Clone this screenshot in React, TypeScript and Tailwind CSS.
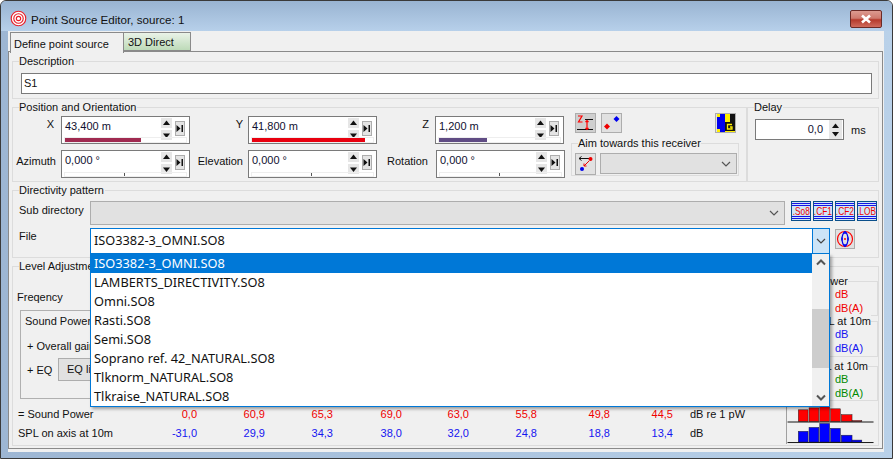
import React from "react";

function Title({ children, className = "" }: { children: React.ReactNode; className?: string }) {
  return <span className={`absolute -top-[8px] left-[6px] bg-[#f0f0f0] pr-[1px] leading-[15px] whitespace-nowrap ${className}`}>{children}</span>;
}

function Tri({ up }: { up?: boolean }) {
  return (
    <svg width="11" height="10" viewBox="0 0 11 10" className="bg-[#e6e6e6] block">
      <path d={up ? "M5.5 2.5L9 7H2Z" : "M5.5 8L2 3.5H9Z"} fill="#111" />
    </svg>
  );
}

function Spin() {
  return (
    <div className="flex flex-col gap-[2px]">
      <Tri up />
      <Tri />
    </div>
  );
}

function EndBtn() {
  return (
    <div className="w-[10px] h-[15px] bg-[#e4e4e4] border border-[#adadad] flex items-center justify-center">
      <svg width="8" height="9" viewBox="0 0 8 9">
        <path d="M0.5 1L4.5 4.5L0.5 8Z M5.5 1H7V8H5.5Z" fill="#111" />
      </svg>
    </div>
  );
}

function Field({ value, fill, pct, tick }: { value: string; fill?: string; pct?: number; tick?: number }) {
  return (
    <div className="w-[129px] h-[28px] border border-[#7a7a7a] bg-white flex flex-col px-[2px] pt-[1px]">
      <div className="flex items-start h-[19px]">
        <span className="flex-1 pl-[1px] text-[#101030] leading-[16px]">{value}</span>
        <div className="mr-[3px]"><Spin /></div>
        <div className="mr-[2px] mt-[3px]"><EndBtn /></div>
      </div>
      <div className={`relative h-[6px] border border-[#eeeeee] ${tick !== undefined ? "mt-[1px]" : ""}`}>
        {fill && <div className="h-full" style={{ width: `${pct}%`, backgroundColor: fill }} />}
        {tick !== undefined && <div className="absolute top-0 bottom-0 w-[1px] bg-[#555]" style={{ left: `${tick}%` }} />}
      </div>
    </div>
  );
}

function ToolBtn({ children, className = "w-[21px] h-[20px]" }: { children: React.ReactNode; className?: string }) {
  return <div className={`${className} bg-[#e1e1e1] border border-[#adadad] flex items-center justify-center shrink-0`}>{children}</div>;
}

function Chevron({ color = "#555" }: { color?: string }) {
  return (
    <svg width="10" height="6" viewBox="0 0 10 6"><path d="M1 1L5 5L9 1" fill="none" stroke={color} strokeWidth="1.2" /></svg>
  );
}

function FileBtn({ label }: { label: string }) {
  return (
    <div className="w-[20px] h-[20px] bg-[#cfe6f7] border border-[#0a4f8a] relative shrink-0">
      <svg width="18" height="18" viewBox="0 0 18 18" className="absolute left-0 top-0">
        <path d="M0 1.5H18M0 3.5H18M0 14.5H18M0 16.5H18" stroke="#1414e6" strokeWidth="1" />
      </svg>
      <div className="absolute inset-x-0 top-[2px] flex justify-center">
        <span className="text-[11px] leading-[14px] text-[#f00000] scale-x-[0.76] whitespace-nowrap">{label}</span>
      </div>
    </div>
  );
}

function BottomRow({ label, values, unit, color }: { label: string; values: string[]; unit: string; color: string }) {
  const widths = ["w-[68px]", "w-[68px]", "w-[69px]", "w-[67px]", "w-[68px]", "w-[73px]", "w-[63px]"];
  return (
    <div className="flex items-center h-[19px]">
      <span className="w-[129px] pl-[5px] shrink-0 whitespace-nowrap">{label}</span>
      <span className={`w-[55px] text-right ${color}`}>{values[0]}</span>
      {values.slice(1).map((v, i) => (
        <span key={i} className={`${widths[i]} text-right ${color}`}>{v}</span>
      ))}
      <span className="ml-[17px] whitespace-nowrap">{unit}</span>
    </div>
  );
}

function SmallGroup({ title, color, className, titleClass }: { title: string; color: string; className: string; titleClass: string }) {
  return (
    <div className={`relative border border-[#dcdcdc] w-[118px] ${className}`}>
      <span className={`absolute -top-[8px] bg-[#f0f0f0] leading-[15px] whitespace-nowrap ${titleClass}`}>{title}</span>
      <div className={`pl-[74px] pt-[5px] leading-[14px] ${color}`}>
        <div>dB</div>
        <div>dB(A)</div>
      </div>
    </div>
  );
}

const files = [
  "ISO3382-3_OMNI.SO8",
  "LAMBERTS_DIRECTIVITY.SO8",
  "Omni.SO8",
  "Rasti.SO8",
  "Semi.SO8",
  "Soprano ref. 42_NATURAL.SO8",
  "Tlknorm_NATURAL.SO8",
  "Tlkraise_NATURAL.SO8",
];

export default function App() {
  return (
    <div
      className="relative w-[893px] h-[459px] overflow-hidden border border-[#3a3a3a] rounded-t-[6px] bg-[linear-gradient(90deg,#9db6d3,#b9d1e9)] text-[11px] text-[#111]"
      style={{ fontFamily: '"Liberation Sans", "Noto Sans", sans-serif' }}
    >
      {/* Title bar */}
      <div className="h-[30px] flex items-start pt-[9px] pl-[9px] pr-[10px] bg-[linear-gradient(180deg,#99b4d2,#b7d0ea)]">
        <svg width="17" height="17" viewBox="0 0 18 18" className="mr-[4px]">
          <circle cx="9" cy="9" r="7.7" fill="#fff" stroke="#e8202a" strokeWidth="1.2" />
          <circle cx="9" cy="9" r="5" fill="none" stroke="#e8202a" strokeWidth="1.2" />
          <circle cx="9" cy="9" r="2.3" fill="none" stroke="#e8202a" strokeWidth="1.2" />
        </svg>
        <span className="text-[11.6px] leading-[20px] text-[#111] flex-1">Point Source Editor, source: 1</span>
        <div className="w-[32px] h-[18px] rounded-[2px] border border-[#6b2a26] bg-[linear-gradient(180deg,#dc9a90_0%,#cf7a6e_45%,#b53a2c_55%,#cf6a5c_100%)] flex items-center justify-center">
          <svg width="12" height="10" viewBox="0 0 12 10"><path d="M2 1.5L10 8.5M10 1.5L2 8.5" stroke="#fff" strokeWidth="2.6" /></svg>
        </div>
      </div>

      {/* Client */}
      <div className="ml-[7px] w-[876px] h-[421px] bg-[#f0f0f0]">
        {/* Tabs */}
        <div className="flex h-[21px] pl-[2px] pt-[1px] relative z-10">
          <div className="w-[114px] h-[21px] bg-[#f0f0f0] border-x border-t border-[#8a8a8a] pl-[3px] pt-[3px] leading-[16px]">Define point source</div>
          <div className="w-[67px] h-[19px] bg-[linear-gradient(180deg,#eaf3e8,#bddab8)] border-y border-r border-[#8a8a8a] pl-[4px] pt-[1px] leading-[16px]">3D Direct</div>
        </div>

        {/* Pane */}
        <div className="-mt-[1px] w-[875px] h-[398px] border border-[#8a8a8a] pl-[3px] pt-[9px]">
          {/* Description */}
          <div className="relative w-[867px] h-[38px] border border-[#dcdcdc] pl-[8px] pt-[11px]">
            <Title>Description</Title>
            <div className="w-[851px] h-[21px] border border-[#7a7a7a] bg-white pl-[2px] leading-[19px]">S1</div>
          </div>

          <div className="flex mt-[8px]">
            {/* Position */}
            <div className="relative w-[735px] h-[75px] border border-[#dcdcdc] pt-[8px]">
              <Title>Position and Orientation</Title>
              <div className="flex items-start">
                <span className="w-[48px] text-right pr-[7px]">X</span>
                <Field value="43,400 m" fill="#a02a50" pct={63} />
                <span className="w-[58px] text-right pr-[5px]">Y</span>
                <Field value="41,800 m" fill="#e8000f" pct={93} />
                <span className="w-[58px] text-right pr-[6px]">Z</span>
                <Field value="1,200 m" fill="#604c84" pct={40} />
                <div className="ml-[11px] -mt-[3px] flex gap-[5px]">
                  <ToolBtn>
                    <svg width="19" height="18" viewBox="0 0 19 18" className="bg-[#cfcfcf]">
                      <path d="M9 5.5H17M1 15.5H17" stroke="#111" strokeWidth="1" />
                      <path d="M2 2H6L2.5 8H6.5" fill="none" stroke="#f00" strokeWidth="1.2" />
                      <path d="M11 7V15M9.5 8L11 6.5L12.5 8M9.5 14L11 15.5L12.5 14" fill="none" stroke="#f00" strokeWidth="1.2" />
                    </svg>
                  </ToolBtn>
                  <ToolBtn>
                    <svg width="19" height="18" viewBox="0 0 19 18">
                      <path d="M14.5 2L17.5 5L14.5 8L11.5 5Z" fill="#0000ee" />
                      <path d="M5 9.5L8 12.5L5 15.5L2 12.5Z" fill="#ee0000" />
                    </svg>
                  </ToolBtn>
                  <div className="ml-[88px]">
                    <ToolBtn>
                      <svg width="18" height="18" viewBox="0 0 18 18">
                        <rect x="0" y="0" width="18" height="18" fill="#ffee00" />
                        <path d="M0 3L3 3V0H8V18H3V15H0Z" fill="#0000ee" />
                        <path d="M13 0H18V8H13Z" fill="#111" />
                        <path d="M8 8H18V17H8Z" fill="#111" />
                        <path d="M15 10.5H10.5V15H15V13H13" fill="none" stroke="#ffee00" strokeWidth="1.3" />
                      </svg>
                    </ToolBtn>
                  </div>
                </div>
              </div>
              <div className="flex items-start mt-[6px]">
                <span className="w-[48px] text-right mt-[3px] pr-[5px] whitespace-nowrap">Azimuth</span>
                <Field value="0,000 °" tick={49} />
                <span className="w-[58px] text-right mt-[3px] pr-[5px] whitespace-nowrap">Elevation</span>
                <Field value="0,000 °" tick={49} />
                <span className="w-[59px] text-right mt-[3px] pr-[8px] whitespace-nowrap">Rotation</span>
                <Field value="0,000 °" tick={49} />
                <div className="relative ml-[6px] -mt-[7px] w-[168px] h-[33px] border border-[#dcdcdc] pl-[3px] pt-[9px] flex gap-[4px]">
                  <span className="absolute -top-[8px] left-[6px] bg-[#f0f0f0] leading-[15px] whitespace-nowrap">Aim towards this receiver</span>
                  <ToolBtn className="w-[21px] h-[22px]">
                    <svg width="19" height="18" viewBox="0 0 19 18">
                      <path d="M13 3.5H3M5.5 1.5L3 3.5L5.5 5.5" fill="none" stroke="#111" strokeWidth="1" />
                      <circle cx="14.5" cy="4" r="2" fill="#ee0000" />
                      <circle cx="6" cy="14" r="2" fill="#0000ee" />
                      <path d="M13 6L8 11M8 8.5V11H10.5" fill="none" stroke="#ee0000" strokeWidth="1" />
                    </svg>
                  </ToolBtn>
                  <div className="w-[137px] h-[21px] bg-[#e1e1e1] border border-[#adadad] flex items-center justify-end pr-[5px]">
                    <Chevron />
                  </div>
                </div>
              </div>
            </div>

            {/* Delay */}
            <div className="relative w-[132px] h-[75px] border border-[#dcdcdc] pl-[7px] pt-[11px] flex items-start">
              <Title>Delay</Title>
              <div className="w-[89px] h-[21px] border border-[#7a7a7a] bg-white flex items-center justify-end pr-[1px]">
                <span className="mr-[6px] text-[#101030]">0,0</span>
                <div className="flex flex-col h-[19px] w-[13px] bg-[#e6e6e6] items-center justify-center">
                  <svg width="9" height="8" viewBox="0 0 9 8"><path d="M4.5 1.5L8 6H1Z" fill="#111" /></svg>
                  <svg width="9" height="8" viewBox="0 0 9 8"><path d="M4.5 6.5L1 2H8Z" fill="#111" /></svg>
                </div>
              </div>
              <span className="ml-[7px] mt-[3px]">ms</span>
            </div>
          </div>

          {/* Directivity */}
          <div className="relative mt-[8px] w-[867px] h-[68px] border border-[#dcdcdc] pl-[6px] pt-[10px]">
            <Title>Directivity pattern</Title>
            <div className="flex items-start">
              <span className="w-[71px] mt-[1px] whitespace-nowrap">Sub directory</span>
              <div className="w-[695px] h-[24px] bg-[#e1e1e1] border border-[#adadad] flex items-center justify-end pr-[5px]">
                <Chevron />
              </div>
              <div className="flex gap-[2px] ml-[6px]">
                <FileBtn label=".So8" />
                <FileBtn label=".CF1" />
                <FileBtn label=".CF2" />
                <FileBtn label=".LOB" />
              </div>
            </div>
            <div className="mt-[2px] flex">
              <span className="w-[71px] mt-[1px]">File</span>
              <div className="w-[739px] h-[26px]" />
              <div className="ml-[6px] mt-[2px]">
                <ToolBtn className="w-[20px] h-[20px]">
                  <svg width="18" height="18" viewBox="0 0 18 18">
                    <circle cx="9" cy="9" r="7.5" fill="none" stroke="#f00" strokeWidth="1.2" />
                    <path d="M9 1.5C5 5 5 13 9 16.5C13 13 13 5 9 1.5Z" fill="none" stroke="#0000ee" strokeWidth="1.2" />
                    <path d="M7.5 3H10.5M7.5 15H10.5M6 7.5V10.5M12 7.5V10.5" stroke="#0000ee" strokeWidth="1.5" />
                    <circle cx="9" cy="9" r="1" fill="#f00" />
                  </svg>
                </ToolBtn>
              </div>
            </div>
          </div>

          {/* Level */}
          <div className="relative mt-[8px] w-[867px] h-[180px] border border-[#dcdcdc]">
            <Title>Level Adjustment</Title>
            <div className="flex h-[134px]">
              <div className="w-[730px] pl-[4px] pt-[23px]">
                <div className="leading-[15px]">Freqency</div>
                <div className="ml-[3px] mt-[5px] h-[89px] w-[700px] border-l border-b border-t border-[#b0b0b0] pl-[4px] pt-[3px]">
                  <div className="leading-[15px]">Sound Power</div>
                  <div className="ml-[2px] mt-[10px] leading-[15px]">+ Overall gain</div>
                  <div className="mt-[4px] flex items-center">
                    <span className="ml-[2px] mt-[2px] w-[31px]">+ EQ</span>
                    <div className="w-[80px] h-[23px] bg-[#e1e1e1] border border-[#adadad] pl-[8px] leading-[21px]">EQ list</div>
                  </div>
                </div>
              </div>
              <div className="flex flex-col pt-[14px] ml-[17px]">
                <SmallGroup title="Sound Power" titleClass="right-[29px]" color="text-[#f00000]" className="h-[36px]" />
                <SmallGroup title="SPL at 10m" titleClass="right-[6px]" color="text-[#1414f0]" className="h-[37px] mt-[5px]" />
                <SmallGroup title="SPL at 10m" titleClass="right-[9px]" color="text-[#008a00]" className="h-[35px] mt-[9px]" />
              </div>
            </div>
            <div className="flex items-start mt-[4px]">
              <div className="w-[773px]">
                <BottomRow label="= Sound Power" color="text-[#f00000]" unit="dB re 1 pW" values={["0,0", "60,9", "65,3", "69,0", "63,0", "55,8", "49,8", "44,5"]} />
                <BottomRow label="SPL on axis at 10m" color="text-[#1414f0]" unit="dB" values={["-31,0", "29,9", "34,3", "38,0", "32,0", "24,8", "18,8", "13,4"]} />
              </div>
              <svg width="91" height="44" viewBox="0 0 91 44" className="shrink-0 border-t border-l border-[#a0a0a0] -mt-[5px]">
                <g fill="#ff0000" stroke="#222" strokeWidth="0.5">
                  <rect x="11" y="9" width="10" height="12" />
                  <rect x="22" y="7" width="10" height="14" />
                  <rect x="33" y="1" width="10" height="20" />
                  <rect x="44" y="8" width="10" height="13" />
                  <rect x="55" y="14" width="11" height="7" />
                  <rect x="66" y="20" width="10" height="1" />
                </g>
                <g fill="#0000ff" stroke="#222" strokeWidth="0.5">
                  <rect x="11" y="31" width="10" height="11" />
                  <rect x="22" y="27" width="10" height="15" />
                  <rect x="33" y="23" width="10" height="19" />
                  <rect x="44" y="28" width="10" height="14" />
                  <rect x="55" y="35" width="11" height="7" />
                  <rect x="66" y="40" width="10" height="2" />
                </g>
                <path d="M0 21.5H88M0 42.5H88" stroke="#111" strokeWidth="1" />
              </svg>
            </div>
          </div>
        </div>
      </div>

      {/* Open combobox: field and list lie over the page */}
      <div className="absolute left-[89px] top-[227px] w-[740px] z-20 text-[12.75px] text-[#111]" style={{ fontFamily: '"Noto Sans", sans-serif' }}>
        <div className="h-[26px] bg-white border border-[#0078d7] flex items-center justify-between pl-[2px]">
          <span className="pl-[1px]">ISO3382-3_OMNI.SO8</span>
          <div className="w-[17px] h-full bg-[#cce4f7] border-l border-[#0078d7] flex items-center justify-center">
            <Chevron color="#444" />
          </div>
        </div>
        <div className="h-[153px] bg-white border border-[#0078d7] border-t-0 flex shadow-[2px_2px_3px_rgba(0,0,0,0.35)]">
          <div className="flex-1 flex flex-col">
            {files.map((f, i) => (
              <div key={f} className={`h-[19px] leading-[19px] pl-[3px] ${i === 0 ? "bg-[#0078d7] text-white" : ""}`}>{f}</div>
            ))}
          </div>
          <div className="w-[17px] bg-[#f0f0f0] flex flex-col items-center justify-between">
            <div className="h-[17px] flex items-center"><svg width="10" height="7" viewBox="0 0 10 7"><path d="M1 5.5L5 1.5L9 5.5" fill="none" stroke="#555" strokeWidth="2" /></svg></div>
            <div className="w-full h-[59px] bg-[#cdcdcd] -mb-[16px]" />
            <div className="h-[17px] flex items-center"><svg width="10" height="7" viewBox="0 0 10 7"><path d="M1 1.5L5 5.5L9 1.5" fill="none" stroke="#555" strokeWidth="2" /></svg></div>
          </div>
        </div>
      </div>
    </div>
  );
}
